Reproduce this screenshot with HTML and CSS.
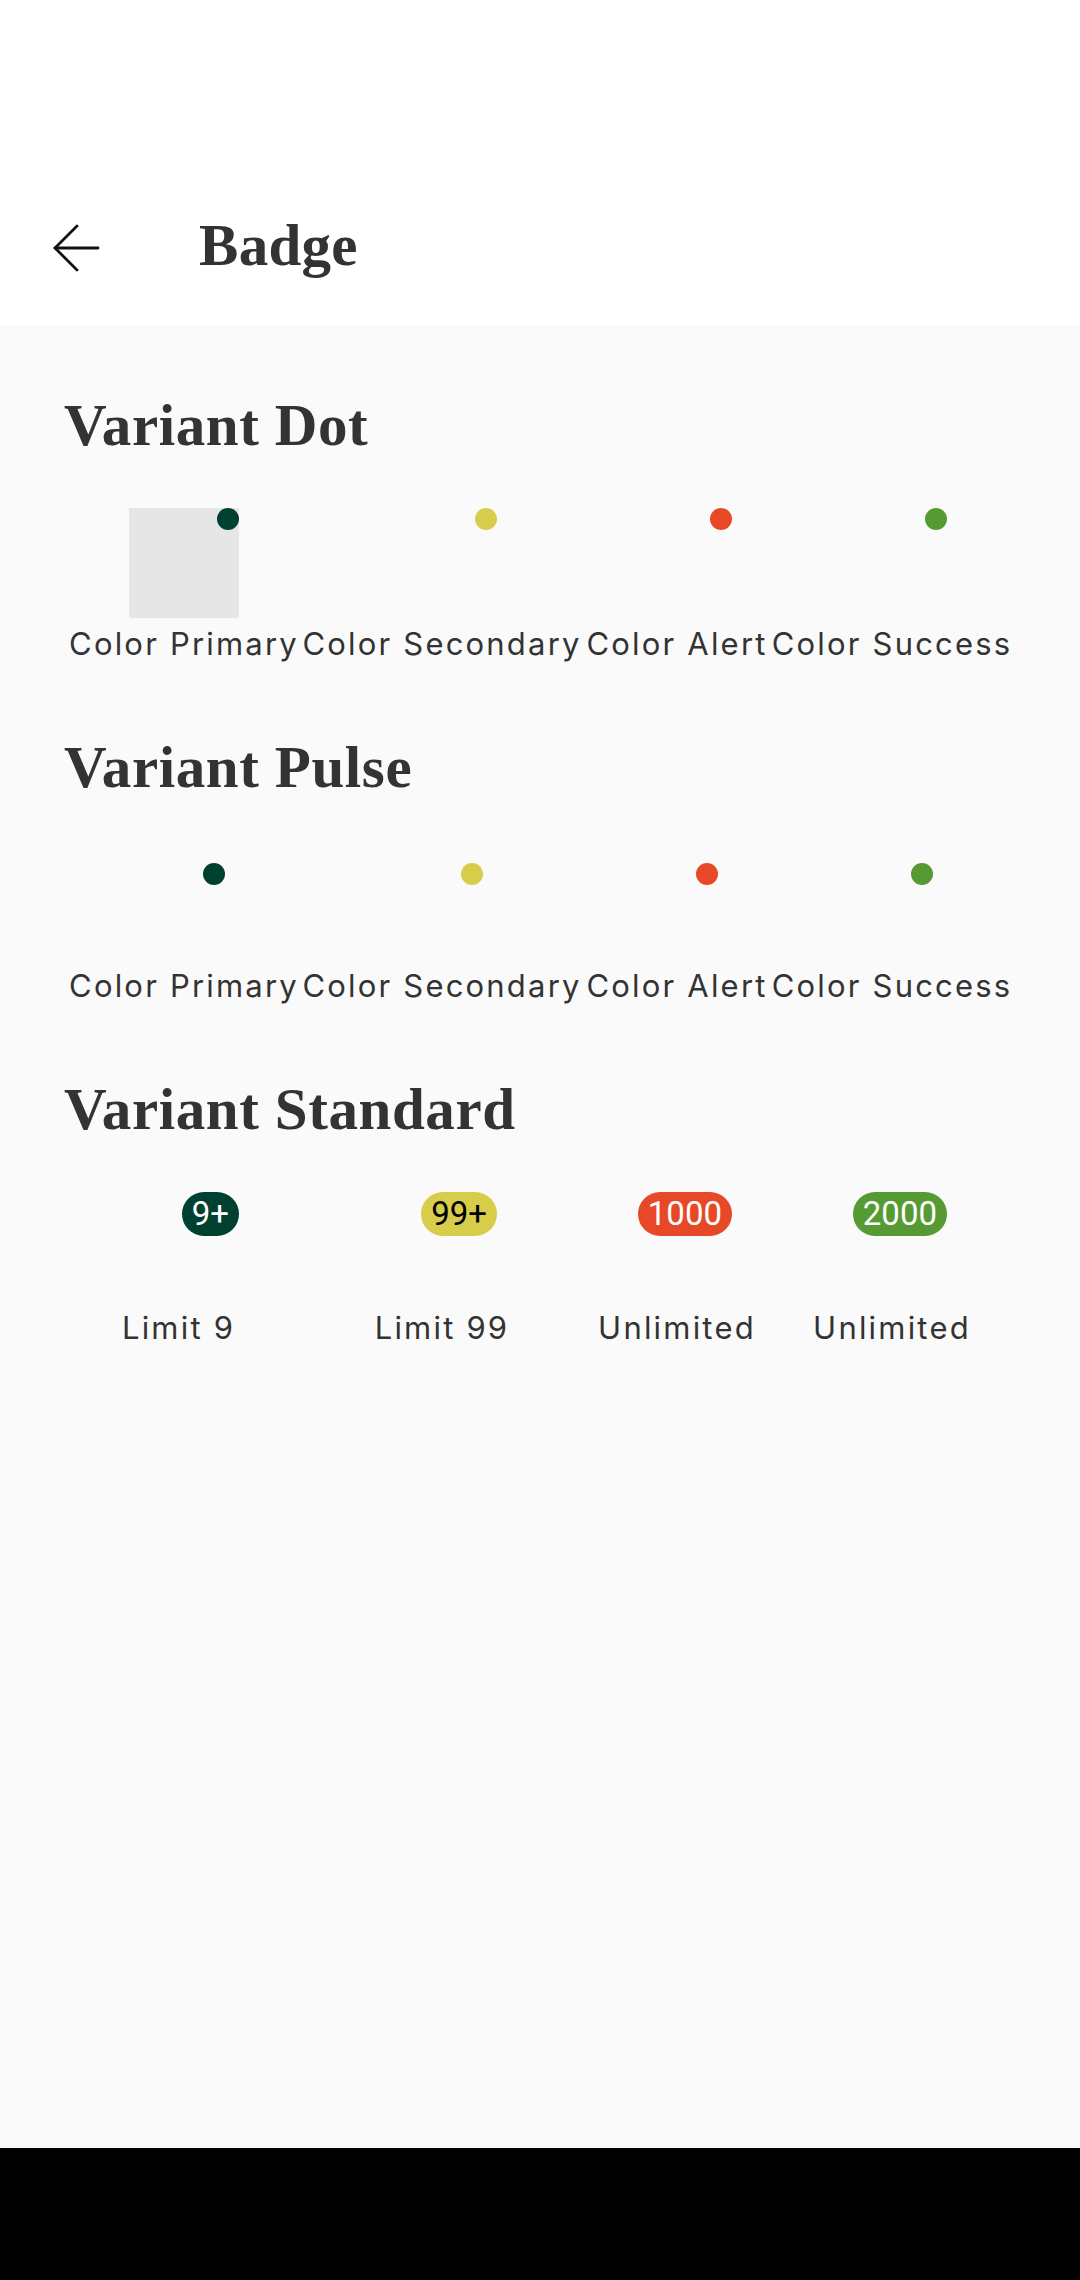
FILE: index.html
```html
<!DOCTYPE html>
<html lang="en">
<head>
<meta charset="utf-8">
<title>Badge</title>
<link rel="stylesheet" href="styles.css">
</head>
<body>
<div class="screen">
  <header class="appbar">
    <div class="appbar-row">
      <span class="back">
        <svg width="48" height="48" viewBox="0 0 48 48" fill="none" stroke="#111" stroke-width="2.8" stroke-linecap="round" stroke-linejoin="round">
          <path d="M46 24H3"/>
          <path d="M25 2L3 24L25 46"/>
        </svg>
      </span>
      <h1 class="title">Badge</h1>
    </div>
  </header>

  <main class="content">
    <section class="section">
      <h2 class="heading">Variant Dot</h2>
      <div class="row">
        <div class="item">
          <div class="anchor anchor-filled"><span class="dot dot-corner c-primary"></span></div>
          <span class="label">Color Primary</span>
        </div>
        <div class="item">
          <div class="anchor"><span class="dot dot-corner c-secondary"></span></div>
          <span class="label">Color Secondary</span>
        </div>
        <div class="item">
          <div class="anchor"><span class="dot dot-corner c-alert"></span></div>
          <span class="label">Color Alert</span>
        </div>
        <div class="item">
          <div class="anchor"><span class="dot dot-corner c-success"></span></div>
          <span class="label">Color Success</span>
        </div>
      </div>
    </section>

    <section class="section">
      <h2 class="heading">Variant Pulse</h2>
      <div class="row">
        <div class="item">
          <div class="anchor"><span class="dot dot-pulse c-primary"></span></div>
          <span class="label">Color Primary</span>
        </div>
        <div class="item">
          <div class="anchor"><span class="dot dot-pulse c-secondary"></span></div>
          <span class="label">Color Secondary</span>
        </div>
        <div class="item">
          <div class="anchor"><span class="dot dot-pulse c-alert"></span></div>
          <span class="label">Color Alert</span>
        </div>
        <div class="item">
          <div class="anchor"><span class="dot dot-pulse c-success"></span></div>
          <span class="label">Color Success</span>
        </div>
      </div>
    </section>

    <section class="section">
      <h2 class="heading">Variant Standard</h2>
      <div class="row">
        <div class="item">
          <div class="anchor"><span class="count c-primary">9+</span></div>
          <span class="label label-left">Limit 9</span>
        </div>
        <div class="item">
          <div class="anchor"><span class="count c-secondary count-dark">99+</span></div>
          <span class="label">Limit 99</span>
        </div>
        <div class="item">
          <div class="anchor"><span class="count c-alert">1000</span></div>
          <span class="label">Unlimited</span>
        </div>
        <div class="item">
          <div class="anchor"><span class="count c-success">2000</span></div>
          <span class="label">Unlimited</span>
        </div>
      </div>
    </section>
  </main>

  <nav class="navbar"></nav>
</div>
</body>
</html>
```

FILE: styles.css
```css
* {
  box-sizing: border-box;
}

html, body {
  margin: 0;
  padding: 0;
}

body {
  background: #fafafa;
  color: #333333;
  font-family: "Liberation Serif", serif;
}

.screen {
  display: flex;
  flex-direction: column;
  width: 1080px;
  height: 2280px;
  overflow: hidden;
}

.appbar {
  background: #ffffff;
  height: 325px;
  padding-top: 184px;
}

.appbar-row {
  display: flex;
  align-items: center;
  height: 128px;
  padding-left: 52px;
}

.back {
  display: flex;
  width: 48px;
  height: 48px;
}

.title {
  margin: 0 0 6px 99px;
  font-family: "Liberation Serif", serif;
  font-weight: 700;
  font-size: 59px;
  line-height: 64px;
  color: #333333;
  letter-spacing: 0.3px;
}

.content {
  flex: 1;
  padding: 68px 64px 0;
  display: flex;
  flex-direction: column;
  gap: 73px;
}

.heading {
  margin: 0;
  font-family: "Liberation Serif", serif;
  font-weight: 700;
  font-size: 59px;
  line-height: 64px;
  color: #333333;
  letter-spacing: 0.6px;
}

.row {
  display: grid;
  grid-template-columns: 240px 276px 194px 236px;
  margin-top: 51px;
}

.item {
  display: flex;
  flex-direction: column;
  align-items: center;
  gap: 8px;
}

.anchor {
  position: relative;
  width: 110px;
  height: 110px;
}

.anchor-filled {
  background: #e6e6e6;
}

.label {
  font-family: "Inter", "Liberation Sans", sans-serif;
  font-size: 31px;
  line-height: 36px;
  letter-spacing: 2.2px;
  color: #333333;
  white-space: nowrap;
}

.label-left {
  margin-right: 11px;
}

.dot {
  position: absolute;
  width: 22px;
  height: 22px;
  border-radius: 50%;
}

.dot-corner {
  top: 0;
  right: 0;
}

.dot-pulse {
  top: 13px;
  right: 14px;
}

.count {
  position: absolute;
  top: 0;
  right: 0;
  height: 44px;
  min-width: 44px;
  padding: 0 10px;
  border-radius: 22px;
  font-family: "Roboto", "Liberation Sans", sans-serif;
  font-size: 33px;
  line-height: 44px;
  color: #ffffff;
  text-align: center;
  white-space: nowrap;
}

.count-dark {
  color: #000000;
}

.c-primary {
  background: #004031;
}

.c-secondary {
  background: #d7cd4b;
}

.c-alert {
  background: #e74828;
}

.c-success {
  background: #559a32;
}

.navbar {
  height: 132px;
  background: #000000;
  flex-shrink: 0;
}
```
